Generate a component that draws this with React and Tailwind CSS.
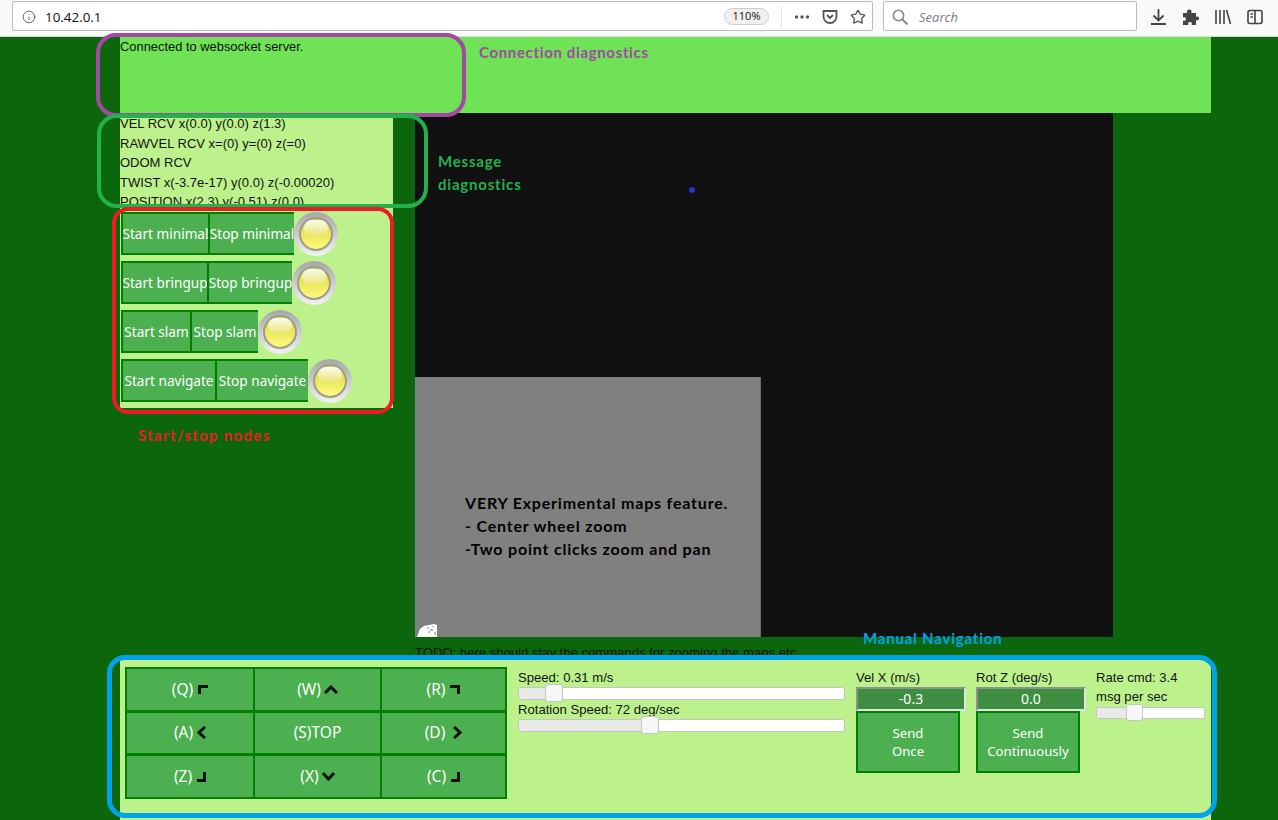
import React from 'react';
import {Info, Star} from 'lucide-react';

const nodes = [
  {start: 'Start minimal', stop: 'Stop minimal', w1: 'w-[87px]', w2: 'w-[86px]'},
  {start: 'Start bringup', stop: 'Stop bringup', w1: 'w-[86px]', w2: 'w-[85px]'},
  {start: 'Start slam', stop: 'Stop slam', w1: 'w-[69px]', w2: 'w-[68px]'},
  {start: 'Start navigate', stop: 'Stop navigate', w1: 'w-[94px]', w2: 'w-[93px]'},
];

const messages = [
  'VEL RCV x(0.0) y(0.0) z(1.3)',
  'RAWVEL RCV x=(0) y=(0) z(=0)',
  'ODOM RCV',
  'TWIST x(-3.7e-17) y(0.0) z(-0.00020)',
  'POSITION x(2.3) y(-0.51) z(0.0)',
];

function Glyph({points, w, h}) {
  return (
    <svg width={w} height={h} viewBox={`0 0 ${w} ${h}`} fill="none" stroke="#111" strokeWidth="3">
      <polyline points={points} />
    </svg>
  );
}

const navKeys = [
  {label: '(Q)', gap: 'gap-[5px]', icon: <Glyph w={10} h={9} points="1.5,9 1.5,1.5 10,1.5" />},
  {label: '(W)', gap: 'gap-[3px]', icon: <Glyph w={14} h={9} points="1,8 7,2 13,8" />},
  {label: '(R)', gap: 'gap-[5px]', icon: <Glyph w={10} h={9} points="0,1.5 8.5,1.5 8.5,9" />},
  {label: '(A)', gap: 'gap-[4px]', icon: <Glyph w={9} h={13} points="8,1 2,6.5 8,12" />},
  {label: '(S)TOP', gap: 'gap-0', icon: null},
  {label: '(D)', gap: 'gap-[8px]', icon: <Glyph w={9} h={13} points="1,1 7,6.5 1,12" />},
  {label: '(Z)', gap: 'gap-[5px]', icon: <Glyph w={9} h={10} points="0,8.5 7.5,8.5 7.5,0" />},
  {label: '(X)', gap: 'gap-[3px]', icon: <Glyph w={13} h={9} points="1,1 6.5,7 12,1" />},
  {label: '(C)', gap: 'gap-[5px]', icon: <Glyph w={9} h={10} points="0,8.5 7.5,8.5 7.5,0" />},
];

function Led() {
  return (
    <div className="flex h-[44px] w-[44px] shrink-0 items-center justify-center rounded-full bg-[linear-gradient(#a6a6a6,#f2f2f2)]">
      <div className="relative h-[34px] w-[34px] rounded-full border-2 border-[#9d9d8c] bg-[linear-gradient(#d8d62e,#fdfa82)]">
        <div className="absolute left-[3px] top-[1px] h-[16px] w-[24px] rounded-full bg-[linear-gradient(#fafaf0,#e8e670)]" />
      </div>
    </div>
  );
}

function Slider({value, thumb, width, height}) {
  return (
    <div className={`relative rounded-[3px] border border-[#c5c5c5] bg-white ${width} ${height}`}>
      <div className="h-full rounded-l-[3px] bg-[#e9e9e9]" style={{width: value}} />
      <div
        className={`absolute top-[-4px] rounded-[3px] border border-[#c5c5c5] bg-[#f6f6f6] ${thumb}`}
        style={{left: value, marginLeft: -9}}
      />
    </div>
  );
}

function SendColumn({label, value, lines}) {
  return (
    <div className="flex w-[110px] flex-col">
      <div className="h-[18px] leading-[17px]">{label}</div>
      <div className="h-[24px] w-[110px] border-2 border-t-[#8f8f8f] border-l-[#8f8f8f] border-r-[#e2e2e2] border-b-[#e2e2e2] bg-[#3e8e41] text-center font-['Noto_Sans',sans-serif] text-[14px] leading-[20px] text-white">
        {value}
      </div>
      <div className="flex h-[62px] w-[104px] flex-col items-center justify-center border-2 border-[#008000] bg-[#4caf50] font-['Noto_Sans',sans-serif] text-[13.2px] leading-[18px] text-white">
        {lines.map((l) => <span key={l}>{l}</span>)}
      </div>
    </div>
  );
}

function Toolbar() {
  return (
    <div className="flex h-[37px] shrink-0 items-start border-b border-[#d9d9d9] bg-[#f9f9fa] pl-[12px] pt-px font-['Open_Sans',sans-serif]">
      <div className="flex h-[30px] w-[861px] items-center rounded-[2px] border border-[#bdbdbd] bg-white pl-[9px] pr-[6px] pt-px">
        <Info size={14} strokeWidth={1.5} className="text-[#555]" />
        <span className="ml-[9px] flex-1 pt-[2px] text-[13.4px] text-[#111]">10.42.0.1</span>
        <span className="flex h-[17px] w-[45px] items-center justify-center rounded-full border border-[#ccc] bg-[#f0f0f0] text-[11px] text-[#111]">110%</span>
        <div className="ml-[12px] h-[22px] w-px bg-[#e4e4e4]" />
        <svg className="ml-[12px]" width="16" height="16" viewBox="0 0 16 16" fill="#555">
          <circle cx="2.5" cy="8" r="1.7" /><circle cx="8" cy="8" r="1.7" /><circle cx="13.5" cy="8" r="1.7" />
        </svg>
        <svg className="ml-[12px]" width="16" height="16" viewBox="0 0 16 16" fill="none" stroke="#555" strokeWidth="1.8">
          <path d="M1.5 2h13v5.500a6.500 6.500 0 0 1-13 0z" />
          <path d="M5 6l3 3 3-3" />
        </svg>
        <Star size={16} strokeWidth={2} className="ml-[12px] text-[#555]" />
      </div>
      <div className="ml-[10px] flex h-[30px] w-[254px] items-center rounded-[2px] border border-[#bdbdbd] bg-white pl-[8px] pt-px">
        <svg width="16" height="16" viewBox="0 0 16 16" fill="none" stroke="#8a8a8a" strokeWidth="1.6">
          <circle cx="6.5" cy="6.5" r="5.2" />
          <path d="M10.500 10.500l5 5" strokeWidth="2" />
        </svg>
        <span className="ml-[11px] pt-[2px] text-[13px] italic text-[#7a7a85]">Search</span>
      </div>
      <div className="ml-[14px] flex h-[30px] items-center gap-[16px] pt-px">
        <svg width="15" height="16" viewBox="0 0 15 16" fill="none" stroke="#444" strokeWidth="1.8">
          <path d="M7.500 0v11M2.500 6.500l5 5 5-5M0 15h15" />
        </svg>
        <svg width="17" height="16" viewBox="0 0 17 16" fill="#444">
          <path d="M1 4h4.500c-1-1.200-.6-3.600 1.800-3.600S10.100 2.800 9.100 4H14v4c1.100-.9 3-.5 3 1.500S15.100 12 14 11v5H9.500c.9-1.300.5-3-1.500-3s-2.500 1.700-1.500 3H1v-4.500c1.200.8 3 .3 3-1.500S2.200 7.700 1 8.500z" />
        </svg>
        <svg width="16" height="16" viewBox="0 0 16 16" fill="none" stroke="#444" strokeWidth="1.6">
          <path d="M1 1v14M5 1v14M9 1v14M11.500 1l4 14" />
        </svg>
        <svg width="16" height="16" viewBox="0 0 16 16" fill="none" stroke="#444" strokeWidth="1.6">
          <rect x="1" y="1.500" width="14" height="13" rx="2" />
          <path d="M8 1.500v13M3.500 5h2.500M3.500 8h2.500" />
        </svg>
      </div>
    </div>
  );
}

export default function App() {
  return (
    <div className="relative flex h-[820px] w-[1278px] flex-col overflow-hidden bg-[#0c660c] font-['Liberation_Sans',sans-serif] text-[13.1px] text-[#111]">
      <Toolbar />

      <div className="ml-[120px] mr-[67px] h-[76px] shrink-0 bg-[#6fe256] pt-px text-[12.9px] leading-[18px]">
        Connected to websocket server.
      </div>

      <div className="ml-[120px] flex h-[547px] shrink-0 gap-[22px]">
        {/* left column */}
        <div className="flex h-[295px] w-[273px] flex-col bg-[#bdf18c]">
          <div className="h-[94px] overflow-hidden pt-px">
            {messages.map((m) => (
              <div key={m} className="h-[19.5px] whitespace-nowrap text-[13px] leading-[19.5px]">{m}</div>
            ))}
          </div>
          <div className="flex flex-col gap-[6px] pl-px pt-[5px] font-['Noto_Sans',sans-serif] text-[13.6px] text-white">
            {nodes.map((n) => (
              <div key={n.start} className="flex h-[43px]">
                <div className={`flex items-center justify-center whitespace-nowrap border-y-2 border-l-2 border-[#008000] bg-[#4caf50] pt-[2px] ${n.w1}`}>{n.start}</div>
                <div className={`flex items-center justify-center whitespace-nowrap border-y-2 border-l-2 border-[#008000] bg-[#4caf50] pt-[2px] ${n.w2}`}>{n.stop}</div>
                <Led />
              </div>
            ))}
          </div>
        </div>

        {/* map */}
        <div className="flex w-[698px] flex-col">
          <div className="relative flex h-[524px] shrink-0 items-end bg-[#111]">
            <div className="absolute left-[274px] top-[74px] h-[6px] w-[6px] rounded-full bg-[#2b34c8]" />
            <div className="relative h-[260px] w-[346px] border-r border-[#6a6a6a] bg-[#808080] pl-[50px] pt-[114px] font-['Lato',sans-serif] text-[16px] font-bold leading-[23px] tracking-[0.8px] text-black">
              <div>VERY Experimental maps feature.</div>
              <div>- Center wheel zoom</div>
              <div>-Two point clicks zoom and pan</div>
              <svg className="absolute bottom-0 left-[2px]" width="20" height="13" viewBox="0 0 20 13">
                <path d="M0 13 L3 5 L7 2 L12 1 L17 0 L20 1 L20 13z" fill="#fff" />
                <path d="M10 3h2v2h-2zM13 5h3v2h-3zM15 2h2v1h-2zM11 7h2v2h-2zM17 8h2v3h-2z" fill="#bbb" />
              </svg>
            </div>
          </div>
          <div className="mt-[8px] h-[15px] whitespace-nowrap leading-[15px]">
            TODO: here should stay the commands for zooming the maps etc.
          </div>
        </div>
      </div>

      {/* manual navigation */}
      <div className="ml-[120px] mr-[67px] flex h-[160px] shrink-0 bg-[#bdf18c] pl-[5px] pt-[7px]">
        <div className="grid h-[132px] w-[382px] grid-cols-[128px_127px_123px] grid-rows-3 gap-y-[3px] border-2 border-[#008000] bg-[#008000] font-['Noto_Sans',sans-serif] text-[15.5px] text-white">
          {navKeys.map((k, i) => (
            <div key={k.label} className={`flex items-center justify-center bg-[#4caf50] ${k.gap} ${i % 3 !== 2 ? 'border-r-2 border-[#008000]' : ''}`}>
              <span>{k.label}</span>
              {k.icon}
            </div>
          ))}
        </div>

        <div className="ml-[11px] flex w-[327px] flex-col pt-[2px]">
          <div className="h-[18px] leading-[18px]">Speed: 0.31 m/s</div>
          <Slider value="35px" width="w-[327px]" height="h-[13px]" thumb="h-[18px] w-[18px]" />
          <div className="mt-[1px] h-[18px] leading-[18px]">Rotation Speed: 72 deg/sec</div>
          <Slider value="131px" width="w-[327px]" height="h-[13px]" thumb="h-[18px] w-[18px]" />
        </div>

        <div className="ml-[11px] flex gap-[10px] pt-[2px]">
          <SendColumn label="Vel X (m/s)" value="-0.3" lines={['Send', 'Once']} />
          <SendColumn label="Rot Z (deg/s)" value="0.0" lines={['Send', 'Continuously']} />
          <div className="-mt-px flex w-[109px] flex-col">
            <div className="leading-[19px]">Rate cmd: 3.4<br />msg per sec</div>
            <div className="mt-px">
              <Slider value="38px" width="w-[109px]" height="h-[12px]" thumb="h-[17px] w-[17px]" />
            </div>
          </div>
        </div>
      </div>

      {/* annotations drawn over the page */}
      <div className="absolute left-[96px] top-[33px] h-[84px] w-[370px] rounded-[20px] border-4 border-[#a349a4]" />
      <div className="absolute left-[97px] top-[114px] h-[94px] w-[331px] rounded-[20px] border-4 border-[#22b14c]" />
      <div className="absolute left-[112px] top-[207px] h-[207px] w-[282px] rounded-[16px] border-4 border-[#ed1c24]" />
      <div className="absolute left-[107px] top-[655px] h-[163px] w-[1110px] rounded-[18px] border-[5px] border-[#00a2e8]" />

      <div className="absolute left-[479px] top-[41px] font-['Lato',sans-serif] text-[15px] font-bold tracking-[0.65px] text-[#a349a4]">Connection diagnostics</div>
      <div className="absolute left-[438px] top-[150px] font-['Lato',sans-serif] text-[15px] font-bold leading-[23px] tracking-[0.8px] text-[#22b14c]">Message<br />diagnostics</div>
      <div className="absolute left-[138px] top-[424px] font-['Lato',sans-serif] text-[15px] font-bold tracking-[1.3px] text-[#ed1c24]">Start/stop nodes</div>
      <div className="absolute left-[863px] top-[627px] font-['Lato',sans-serif] text-[15px] font-bold tracking-[0.8px] text-[#00a2e8]">Manual Navigation</div>
    </div>
  );
}
